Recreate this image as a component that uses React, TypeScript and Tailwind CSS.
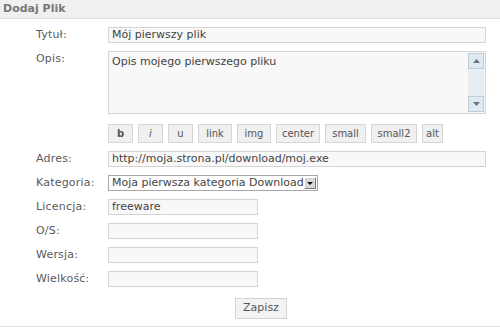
const font = { fontFamily: '"DejaVu Sans", Verdana, sans-serif' };

const tags = [
  { label: "b", w: "w-[25px]", style: "font-bold" },
  { label: "i", w: "w-[25px]", style: "italic" },
  { label: "u", w: "w-[25px]", style: "" },
  { label: "link", w: "w-[34px]", style: "" },
  { label: "img", w: "w-[34px]", style: "" },
  { label: "center", w: "w-[44px]", style: "" },
  { label: "small", w: "w-[41px]", style: "" },
  { label: "small2", w: "w-[46px]", style: "" },
  { label: "alt", w: "w-[21px]", style: "" },
];

function Label({ children }: { children: string }) {
  return (
    <span className="h-[16px] w-[72px] shrink-0 text-[11px] leading-[16px] tracking-[0.2px] text-[#5a5a5a]">
      {children}
    </span>
  );
}

function Field({ value, wide }: { value?: string; wide?: boolean }) {
  return (
    <div
      className={`h-[16px] ${wide ? "w-[378px]" : "w-[150px]"} overflow-hidden whitespace-nowrap border border-[#d4d4d4] bg-[#f8f8f8] px-[3px] text-[11px] leading-[14px] text-[#444]`}
    >
      {value}
    </div>
  );
}

function Row({ label, children }: { label: string; children: React.ReactNode }) {
  return (
    <div className="flex items-start">
      <Label>{label}</Label>
      {children}
    </div>
  );
}

function Arrow({ up }: { up?: boolean }) {
  return (
    <div className="flex h-[16px] w-[16px] items-center justify-center border border-[#bccbd8] bg-[#dfe9f1]">
      <svg width="7" height="4" viewBox="0 0 7 4">
        <path d={up ? "M0 4 L3.5 0 L7 4 Z" : "M0 0 L3.5 4 L7 0 Z"} fill="#6b7580" />
      </svg>
    </div>
  );
}

export default function App() {
  return (
    <div className="h-[327px] w-[500px] bg-white" style={font}>
      <div className="h-[19px] border-b border-[#dcdcdc] bg-[#f0f0f0] pl-[3px] text-[11px] font-bold leading-[18px] text-[#777]">
        Dodaj Plik
      </div>

      <div className="flex w-[486px] flex-col gap-[8px] pl-[36px] pt-[8px]">
        <Row label="Tytuł:">
          <Field value="Mój pierwszy plik" wide />
        </Row>

        <Row label="Opis:">
          <div className="flex h-[63px] w-[378px] border border-[#d4d4d4] bg-[#f8f8f8]">
            <div className="flex-1 px-[3px] pt-[3px] text-[11px] leading-[14px] text-[#444]">
              Opis mojego pierwszego pliku
            </div>
            <div className="my-[1px] mr-[1px] flex w-[16px] flex-col justify-between bg-[#e6eef4]">
              <Arrow up />
              <Arrow />
            </div>
          </div>
        </Row>

        <div className="mt-[2px] flex gap-[5px] pl-[72px]">
          {tags.map((t) => (
            <div
              key={t.label}
              className={`flex h-[19px] ${t.w} items-center justify-center border border-[#d6d6d6] bg-[#f0f0f0] text-[10px] text-[#555] ${t.style}`}
            >
              {t.label}
            </div>
          ))}
        </div>

        <Row label="Adres:">
          <Field value="http://moja.strona.pl/download/moj.exe" wide />
        </Row>

        <Row label="Kategoria:">
          <div className="flex h-[16px] w-[210px] items-center border border-[#a8a8a8] bg-white pl-[3px] text-[11px] leading-[14px] text-[#444]">
            <span className="flex-1 whitespace-nowrap">Moja pierwsza kategoria Download</span>
            <div className="mr-[1px] flex h-[12px] w-[12px] items-center justify-center border border-b-[#777] border-l-[#fff] border-r-[#777] border-t-[#fff] bg-[#d8d8d8]">
              <svg width="6" height="3" viewBox="0 0 6 3">
                <path d="M0 0 L3 3 L6 0 Z" fill="#111" />
              </svg>
            </div>
          </div>
        </Row>

        <Row label="Licencja:">
          <Field value="freeware" />
        </Row>
        <Row label="O/S:">
          <Field />
        </Row>
        <Row label="Wersja:">
          <Field />
        </Row>
        <Row label="Wielkość:">
          <Field />
        </Row>

        <div className="mt-[2px] flex justify-center">
          <div className="mt-[1px] flex h-[21px] w-[52px] items-center justify-center border border-[#d4d4d4] bg-[#f3f3f3] text-[11px] text-[#555]">
            Zapisz
          </div>
        </div>
      </div>

      <div className="mt-[7px] h-[2px] bg-[#e0e0e0]" />
    </div>
  );
}
